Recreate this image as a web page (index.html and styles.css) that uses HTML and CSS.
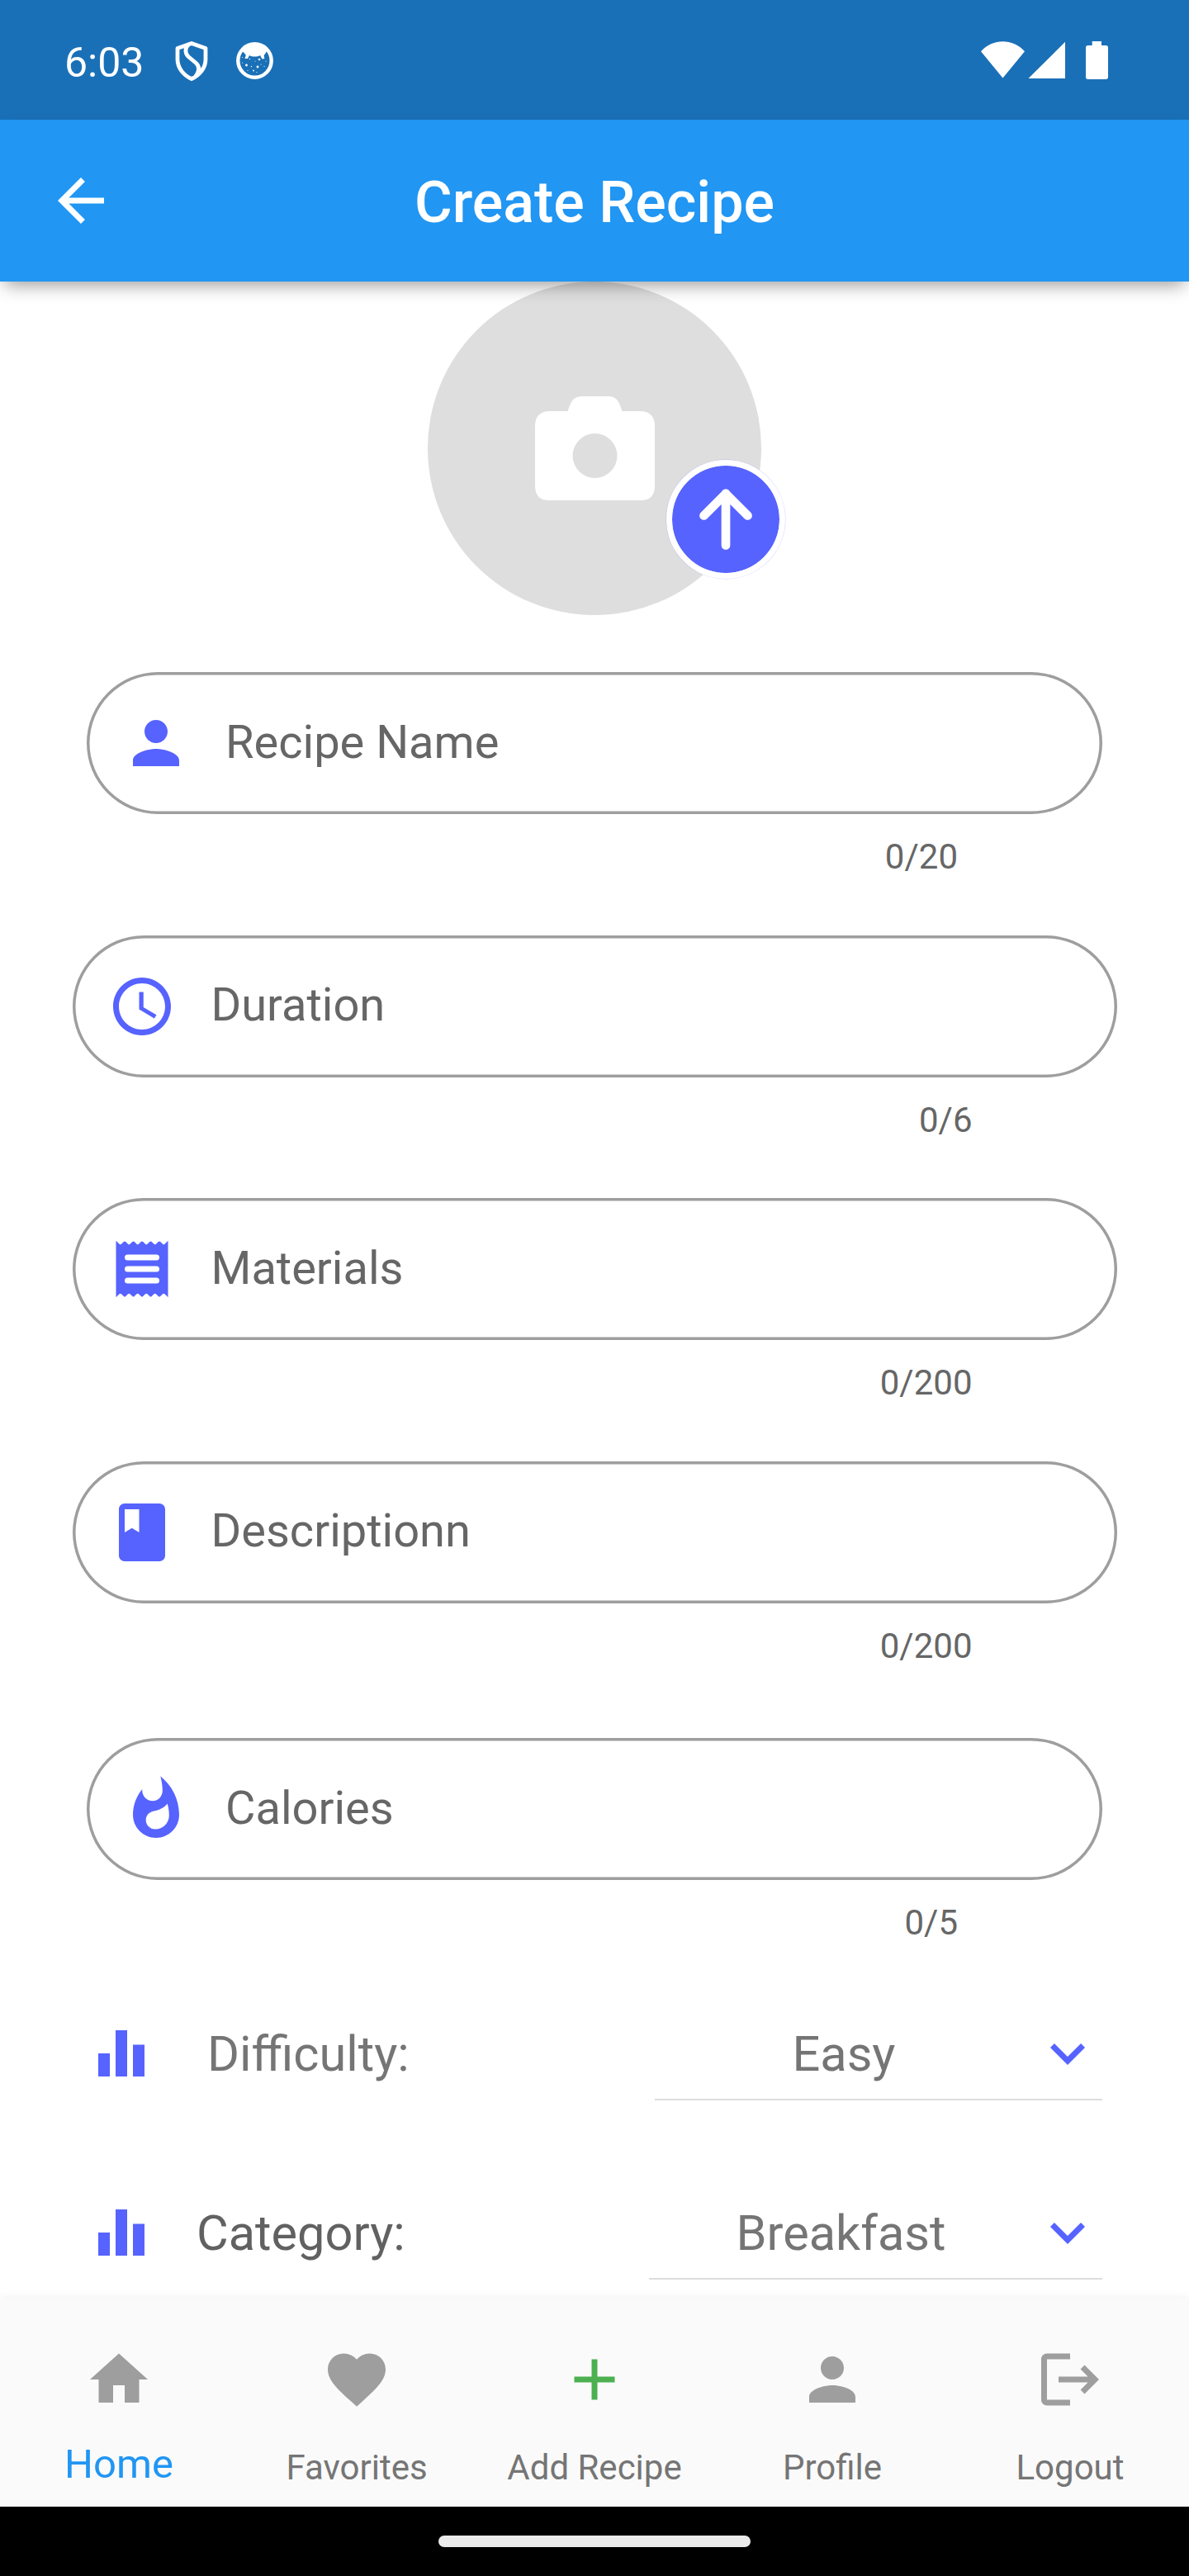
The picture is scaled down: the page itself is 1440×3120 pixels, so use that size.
FILE: index.html
```html
<!DOCTYPE html>
<html lang="en">
<head>
<meta charset="utf-8">
<title>Create Recipe</title>
<link rel="stylesheet" href="styles.css">
</head>
<body>
<div class="screen">
  <div class="status">
    <span class="time">6:03</span>
    <svg class="shield" viewBox="0 0 40 48"><path d="M20 2.500 37 8.500V22C37 32 30 41 20 45.500 10 41 3 32 3 22V8.500Z M17.500 3C12 7 11.500 14 16 18.500L25 26C31 31 29 37 24.500 43"/></svg>
    <svg class="face" viewBox="0 0 45 45"><circle class="ring" cx="22.500" cy="22.500" r="20.200"/><path class="fill" d="M9 7C16 1 29 1 36 7L37.500 10 35 14.500C33 15.500 34 18 34.500 20L31.500 20.500 29 16C26 18 19 18 16 16L14 20 10.500 20C11 18 12.500 15.500 11 14.500L7.500 11Z"/><g class="fill"><circle cx="7.500" cy="18.500" r=".6"/><circle cx="16.500" cy="20.500" r=".7"/><circle cx="28" cy="21" r="1.300"/><circle cx="36" cy="23" r=".6"/><circle cx="23" cy="23" r=".5"/><circle cx="12.500" cy="28" r="1.400"/><circle cx="7.500" cy="25" r=".6"/><circle cx="18.500" cy="29.500" r=".7"/><circle cx="26" cy="30" r="1.400"/><circle cx="30" cy="27" r=".6"/><circle cx="34" cy="29.500" r=".6"/><circle cx="14" cy="34.500" r=".6"/><circle cx="21" cy="34.500" r=".9"/><circle cx="25" cy="36.500" r=".6"/></g></svg>
    <svg class="signals" viewBox="0 0 154 46"><path d="M0 12.300C14-3.800 39-3.800 53 12.300L26.500 44.500ZM57.500 45 102 .800V45ZM134.700 0h11.300v5h5.300q2.700 0 2.700 2.700v35.600q0 2.700-2.700 2.700h-21.600q-2.700 0-2.700-2.700V7.700q0-2.700 2.700-2.700h5z"/></svg>
  </div>
  <header class="appbar">
    <svg class="icon" viewBox="0 0 24 24"><path d="M20 11H7.830l5.590-5.590L12 4l-8 8 8 8 1.410-1.410L7.830 13H20v-2z"/></svg>
    <h1>Create Recipe</h1>
  </header>
  <main>
    <div class="photo">
      <svg class="camera" viewBox="0 0 145 126"><path fill-rule="evenodd" d="M17 18H39.500L42 11Q46 0 56 0H90Q99 0 103 11L105.500 18H128Q145 19 145 36V108Q145 126 128 126H17Q0 126 0 108V36Q0 19 17 18ZM72.500 45a27 27 0 1 0 0 54a27 27 0 1 0 0-54Z"/></svg>
      <div class="upload"><svg viewBox="0 0 130 130"><path d="M65 96.500V33.500M38.500 60.500 65 34 91.500 60.500"/></svg></div>
    </div>
    <div class="field narrow"><div class="box"><svg class="icon" viewBox="0 0 24 24"><path d="M12 12c2.210 0 4-1.790 4-4s-1.790-4-4-4-4 1.790-4 4 1.790 4 4 4zm0 2c-2.670 0-8 1.340-8 4v2h16v-2c0-2.660-5.330-4-8-4z"/></svg><span>Recipe Name</span></div><div class="count">0/20</div></div>
    <div class="field"><div class="box"><svg class="icon" viewBox="0 0 24 24"><path d="M11.990 2C6.470 2 2 6.480 2 12s4.470 10 9.990 10C17.520 22 22 17.520 22 12S17.520 2 11.990 2zM12 20c-4.420 0-8-3.580-8-8s3.580-8 8-8 8 3.580 8 8-3.580 8-8 8zm.5-13H11v6l5.250 3.150.75-1.230-4.500-2.670z"/></svg><span>Duration</span></div><div class="count">0/6</div></div>
    <div class="field"><div class="box"><svg class="icon" viewBox="0 0 24 24"><path fill-rule="evenodd" d="M3 2.200l1.150 1.150q.35.300.7 0l.8-.8q.35-.3.700 0l.8.8q.35.300.7 0l.8-.8q.35-.3.700 0l.8.8q.35.300.7 0l.8-.8q.35-.3.700 0l.8.8q.35.300.7 0l.8-.8q.35-.3.700 0l.8.8q.35.300.7 0l.8-.8q.35-.3.700 0l.8.8q.35.300.7 0L21 2.200V21.800l-1.150-1.150q-.35-.3-.7 0l-.8.8q-.35.300-.7 0l-.8-.8q-.35-.3-.7 0l-.8.8q-.35.300-.7 0l-.8-.8q-.35-.3-.7 0l-.8.8q-.35.300-.7 0l-.8-.8q-.35-.3-.7 0l-.8.8q-.35.300-.7 0l-.8-.8q-.35-.3-.7 0l-.8.8q-.35.300-.7 0l-.8-.8q-.35-.3-.7 0L3 21.800ZM7 7h10a1 1 0 0 1 0 2H7a1 1 0 0 1 0-2ZM7 11h10a1 1 0 0 1 0 2H7a1 1 0 0 1 0-2ZM7 15h10a1 1 0 0 1 0 2H7a1 1 0 0 1 0-2Z"/></svg><span>Materials</span></div><div class="count">0/200</div></div>
    <div class="field"><div class="box"><svg class="icon" viewBox="0 0 24 24"><path d="M18 2H6c-1.100 0-2 .9-2 2v16c0 1.100.9 2 2 2h12c1.100 0 2-.9 2-2V4c0-1.100-.9-2-2-2zM6 4h5v8l-2.500-1.500L6 12V4z"/></svg><span>Descriptionn</span></div><div class="count">0/200</div></div>
    <div class="field narrow last"><div class="box"><svg class="icon" viewBox="0 0 24 24"><path d="M13.500.67s.74 2.650.74 4.800c0 2.060-1.350 3.730-3.410 3.730-2.070 0-3.630-1.670-3.630-3.730l.03-.36C5.210 7.510 4 10.620 4 14c0 4.420 3.580 8 8 8s8-3.580 8-8C20 8.610 17.410 3.800 13.500.67zM11.710 19c-1.780 0-3.220-1.400-3.220-3.140 0-1.620 1.050-2.760 2.810-3.120 1.770-.36 3.600-1.210 4.620-2.580.39 1.290.59 2.650.59 4.040 0 2.650-2.150 4.800-4.800 4.800z"/></svg><span>Calories</span></div><div class="count">0/5</div></div>
    <div class="choice difficulty"><svg class="icon" viewBox="0 0 24 24"><path d="M10 20h4V4h-4v16zm-6 0h4v-8H4v8zM16 9v11h4V9h-4z"/></svg><label>Difficulty:</label><div class="select"><span>Easy</span><svg class="icon" viewBox="0 0 24 24"><path d="M7.410 8.590L12 13.170l4.590-4.580L18 10l-6 6-6-6 1.410-1.410z"/></svg></div></div>
    <div class="choice category"><svg class="icon" viewBox="0 0 24 24"><path d="M10 20h4V4h-4v16zm-6 0h4v-8H4v8zM16 9v11h4V9h-4z"/></svg><label>Category:</label><div class="select"><span>Breakfast</span><svg class="icon" viewBox="0 0 24 24"><path d="M7.410 8.590L12 13.170l4.590-4.580L18 10l-6 6-6-6 1.410-1.410z"/></svg></div></div>
  </main>
  <nav>
    <a class="active"><svg class="icon" viewBox="0 0 24 24"><path d="M10 20v-6h4v6h5v-8h3L12 3 2 12h3v8z"/></svg><span>Home</span></a>
    <a><svg class="icon" viewBox="0 0 24 24"><path d="M12 21.350l-1.450-1.320C5.400 15.360 2 12.280 2 8.500 2 5.420 4.420 3 7.500 3c1.740 0 3.410.81 4.500 2.090C13.090 3.810 14.760 3 16.500 3 19.580 3 22 5.420 22 8.500c0 3.780-3.400 6.860-8.550 11.540L12 21.350z"/></svg><span>Favorites</span></a>
    <a class="add"><svg class="icon" viewBox="0 0 24 24"><path d="M19 13h-6v6h-2v-6H5v-2h6V5h2v6h6v2z"/></svg><span>Add Recipe</span></a>
    <a><svg class="icon" viewBox="0 0 24 24"><path d="M12 12c2.210 0 4-1.790 4-4s-1.790-4-4-4-4 1.790-4 4 1.790 4 4 4zm0 2c-2.670 0-8 1.340-8 4v2h16v-2c0-2.660-5.330-4-8-4z"/></svg><span>Profile</span></a>
    <a><svg class="icon" viewBox="0 0 24 24"><path d="M17 7l-1.410 1.410L18.170 11H8v2h10.170l-2.580 2.580L17 17l5-5zM4 5h8V3H4c-1.100 0-2 .9-2 2v14c0 1.100.9 2 2 2h8v-2H4V5z"/></svg><span>Logout</span></a>
  </nav>
  <div class="gesture"><div class="handle"></div></div>
</div>
</body>
</html>
```
FILE: styles.css
```css
* { box-sizing: border-box; }
body { margin: 0; background: #fff; font-family: Roboto, sans-serif; }
svg { display: block; flex: none; }
.screen { width: 1440px; height: 3120px; display: flex; flex-direction: column; overflow: hidden; }
.icon { width: 84px; height: 84px; fill: currentColor; }

.status { height: 145px; flex: none; display: flex; align-items: flex-start; background: #1a70b7; color: #fff; padding: 50px 98px 0 78px; }
.time { width: 134px; font-size: 50px; line-height: 52px; }
.shield { width: 40px; height: 48px; fill: none; stroke: #fff; stroke-width: 4.800; stroke-linejoin: round; }
.face { width: 45px; height: 45px; margin-left: 34px; margin-top: 1px; }
.ring { fill: none; stroke: #fff; stroke-width: 4.400; }
.fill { fill: #fff; }
.signals { width: 154px; height: 46px; margin-left: auto; fill: #fff; }

.appbar { height: 196px; flex: none; display: grid; grid-template-columns: 84px 1fr 84px; align-items: center; padding: 0 56px; background: #2196f3; color: #fff; position: relative; z-index: 1; box-shadow: 0 10px 20px -6px rgba(0, 0, 0, .4); }
.appbar h1 { margin: 0; padding-top: 3px; text-align: center; font-size: 70px; line-height: 82px; font-weight: 500; }

main { height: 2443px; flex: none; display: flex; flex-direction: column; color: #666; }
.photo { width: 404px; height: 404px; flex: none; align-self: center; display: flex; justify-content: center; padding-top: 139px; border-radius: 50%; background: #dedede; position: relative; margin-bottom: 69px; }
.camera { width: 145px; height: 126px; fill: #fff; }
.upload { position: absolute; left: 289px; top: 216px; width: 144px; height: 144px; border: 7px solid #fff; border-radius: 50%; background: #5663ff; background-clip: padding-box; box-shadow: 0 0 0 .5px rgba(86, 99, 255, .3); }
.upload svg { width: 130px; height: 130px; fill: none; stroke: #fff; stroke-width: 10.700; stroke-linecap: round; stroke-linejoin: round; }

.field { height: 318.500px; flex: none; padding: 0 87.500px; }
.field.narrow { padding: 0 105px; }
.field.last { margin-top: 17px; height: 340px; }
.box { height: 172px; display: flex; align-items: center; padding-left: 42px; border-radius: 86px; box-shadow: inset 0 0 0 3.500px #9e9e9e; }
.box .icon { color: #5663ff; }
.box span { margin-left: 42px; padding-bottom: 3px; font-size: 56px; line-height: 66px; }
.count { margin-top: 27px; padding-right: 175px; text-align: right; font-size: 42px; line-height: 50px; }

.choice { height: 217px; flex: none; display: flex; align-items: flex-start; padding: 0 105px; font-size: 59.500px; line-height: 86px; color: #757575; }
.choice > .icon, .select .icon { color: #5663ff; }
.choice label { margin-left: 62px; }
.category label { margin-left: 49px; color: #616161; }
.select { margin-left: auto; width: 542px; height: 99px; display: flex; border-bottom: 2px solid #ddd; }
.category .select { width: 549px; }
.select span { flex: 1; text-align: center; }

nav { height: 252px; flex: none; display: grid; grid-template-columns: repeat(5, 1fr); background: #fafafa; color: #757575; position: relative; box-shadow: 0 -2px 10px rgba(0, 0, 0, .05); }
nav a { display: flex; flex-direction: column; align-items: center; padding-top: 56px; font-size: 42px; line-height: 50px; }
nav .icon { color: #9e9e9e; }
nav .add .icon { color: #4caf50; }
nav span { margin-top: 40px; }
nav .active span { color: #2196f3; font-size: 49px; margin-top: 36px; }

.gesture { flex: 1; display: flex; justify-content: center; padding-top: 35px; background: #000; }
.handle { width: 378px; height: 14px; border-radius: 7px; background: #ebebeb; }
```
